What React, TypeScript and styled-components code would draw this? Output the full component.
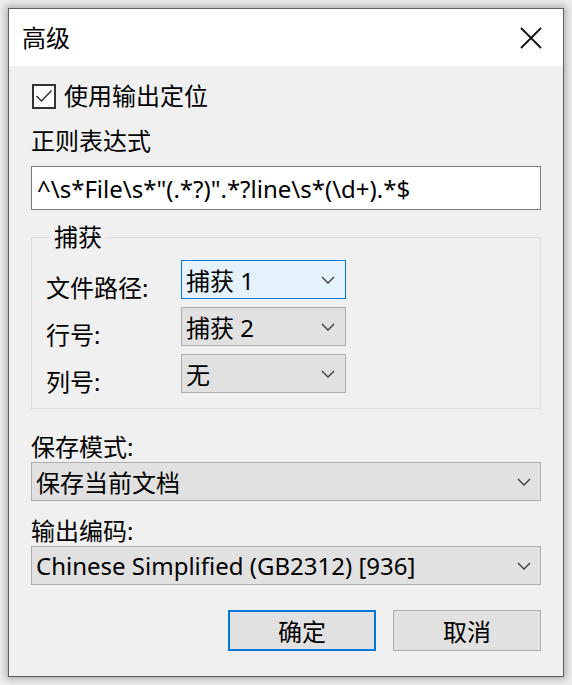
import React from "react";
import styled, { createGlobalStyle } from "styled-components";

const GlobalStyle = createGlobalStyle`
  html, body {
    margin: 0;
    padding: 0;
    background: #ededed;
  }
  body {
    padding: 8px;
    font-family: "Noto Sans", "Noto Sans CJK SC", sans-serif;
  }
  * { box-sizing: border-box; }
`;

const Dialog = styled.div`
  width: 556px;
  height: 669px;
  border: 1px solid #5f5f5f;
  box-shadow: 0 0 7px 2px rgba(0, 0, 0, 0.28);
  background: #f0f0f0;
  display: flex;
  flex-direction: column;
  font-size: 24px;
  color: #000;
`;

const TitleBar = styled.div`
  height: 57px;
  flex: none;
  background: #fff;
  display: flex;
  align-items: center;
  justify-content: space-between;
  padding: 0 21px 0 13px;
`;

const Title = styled.span`
  font-size: 24px;
  line-height: 32px;
`;

const CloseIcon = styled.svg`
  width: 22px;
  height: 22px;
  display: block;
`;

const Client = styled.div`
  flex: 1;
  display: flex;
  flex-direction: column;
  padding: 0 22px;
`;

const CheckRow = styled.label`
  margin-top: 17px;
  height: 26px;
  display: flex;
  align-items: center;
  gap: 8px;
  padding-left: 1px;
  line-height: 32px;
`;

const CheckBox = styled.span`
  width: 24px;
  height: 25px;
  border: 2px solid #333;
  background: #fff;
  display: flex;
  align-items: center;
  justify-content: center;
`;

const Label = styled.div<{ $mt: number }>`
  margin-top: ${(p) => p.$mt}px;
  line-height: 30px;
  height: 30px;
  white-space: nowrap;
`;

const TextInput = styled.div`
  margin-top: 10px;
  height: 44px;
  background: #fff;
  border: 1px solid #7a7a7a;
  display: flex;
  align-items: center;
  padding-left: 5px;
  white-space: nowrap;
`;

const Group = styled.fieldset`
  margin: 11px 0 0 0;
  padding: 7px 0 15px 14px;
  border: 1px solid #dcdcdc;
  min-width: 0;
  display: flex;
  flex-direction: column;
  gap: 8px;
`;

const Legend = styled.legend`
  margin-left: 5px;
  padding: 0 3px;
  line-height: 32px;
`;

const FieldRow = styled.div`
  display: flex;
  align-items: flex-start;
  height: 39px;
`;

const FieldLabel = styled.div`
  width: 135px;
  margin-top: 13px;
  line-height: 30px;
`;

const Combo = styled.div<{ $focused?: boolean; $wide?: boolean }>`
  height: 39px;
  flex: none;
  width: ${(p) => (p.$wide ? "100%" : "165px")};
  background: ${(p) => (p.$focused ? "#e5f1fb" : "#e1e1e1")};
  border: 1px solid ${(p) => (p.$focused ? "#0078d7" : "#adadad")};
  display: flex;
  align-items: center;
  justify-content: space-between;
  padding: 0 ${(p) => (p.$wide ? "9px" : "10px")} 0 4px;
  white-space: nowrap;
`;

const Chevron = styled.svg`
  width: 14px;
  height: 8px;
  display: block;
  flex: none;
`;

const ButtonRow = styled.div`
  margin-top: 25px;
  display: flex;
  justify-content: flex-end;
  gap: 17px;
`;

const Button = styled.div<{ $default?: boolean }>`
  width: 148px;
  height: 41px;
  background: #e1e1e1;
  border: ${(p) => (p.$default ? "2px solid #0078d7" : "1px solid #adadad")};
  display: flex;
  align-items: center;
  justify-content: center;
`;

const ChevronDown = () => (
  <Chevron viewBox="0 0 14 8">
    <path d="M1 1 L7 7 L13 1" fill="none" stroke="#3a3a3a" strokeWidth="1.3" />
  </Chevron>
);

export default function App() {
  return (
    <>
      <GlobalStyle />
      <Dialog>
        <TitleBar>
          <Title>高级</Title>
          <CloseIcon viewBox="0 0 22 22">
            <path d="M1 1 L21 21 M21 1 L1 21" stroke="#111" strokeWidth="1.8" fill="none" />
          </CloseIcon>
        </TitleBar>
        <Client>
          <CheckRow>
            <CheckBox>
              <svg width="18" height="14" viewBox="0 0 18 14">
                <path d="M1.5 7 L6.5 12 L16.5 1.5" fill="none" stroke="#333" strokeWidth="1.5" />
              </svg>
            </CheckBox>
            使用输出定位
          </CheckRow>
          <Label $mt={17}>正则表达式</Label>
          <TextInput>{'^\\s*File\\s*"(.*?)".*?line\\s*(\\d+).*$'}</TextInput>
          <Group>
            <Legend>捕获</Legend>
            <FieldRow>
              <FieldLabel>文件路径:</FieldLabel>
              <Combo $focused>
                捕获 1
                <ChevronDown />
              </Combo>
            </FieldRow>
            <FieldRow>
              <FieldLabel>行号:</FieldLabel>
              <Combo>
                捕获 2
                <ChevronDown />
              </Combo>
            </FieldRow>
            <FieldRow>
              <FieldLabel>列号:</FieldLabel>
              <Combo>
                无
                <ChevronDown />
              </Combo>
            </FieldRow>
          </Group>
          <Label $mt={23}>保存模式:</Label>
          <Combo $wide>
            保存当前文档
            <ChevronDown />
          </Combo>
          <Label $mt={15}>输出编码:</Label>
          <Combo $wide>
            Chinese Simplified (GB2312) [936]
            <ChevronDown />
          </Combo>
          <ButtonRow>
            <Button $default>确定</Button>
            <Button>取消</Button>
          </ButtonRow>
        </Client>
      </Dialog>
    </>
  );
}
